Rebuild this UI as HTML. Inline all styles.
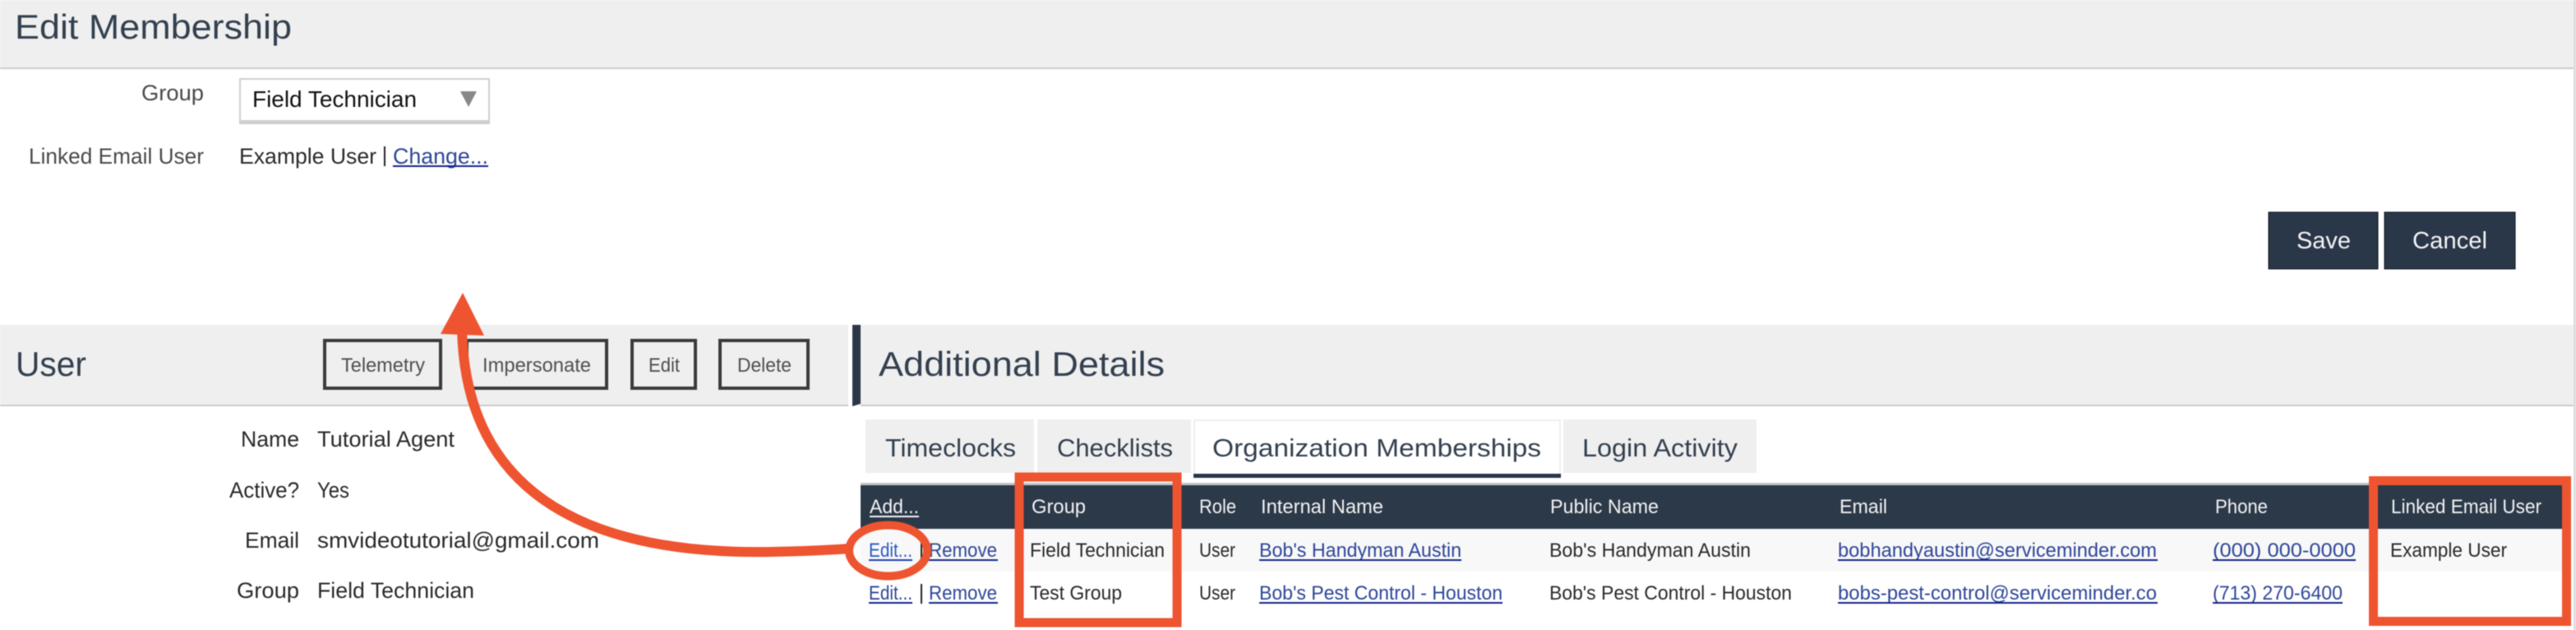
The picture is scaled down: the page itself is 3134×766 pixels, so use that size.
<!DOCTYPE html>
<html><head><meta charset="utf-8"><title>Edit Membership</title>
<style>
html,body{margin:0;padding:0;background:#fff;width:3134px;height:766px;overflow:hidden}
svg{display:block;filter:blur(.5px)}
text{font-family:"Liberation Sans",sans-serif}
.h{font-size:42px;fill:#33404f}
.lbl{font-size:27px;fill:#4a4a4a}
.val{font-size:27px;fill:#2a2a2a}
.btn{font-size:24px;fill:#505050}
.tab{font-size:31px;fill:#33404f}
.th{font-size:24px;fill:#f2f2f2}
.td{font-size:24px;fill:#2a2a2a}
.lnk{font-size:24px;fill:#2d4699}
</style></head><body>
<svg width="3134" height="766" viewBox="0 0 3134 766" xmlns="http://www.w3.org/2000/svg">
<rect width="3134" height="766" fill="#fff"/>

<!-- Edit Membership header -->
<rect x="0" y="0" width="3131" height="82" fill="#efefef"/>
<rect x="0" y="82" width="3131" height="2" fill="#cccccc"/>
<text class="h" x="18" y="47" textLength="337" lengthAdjust="spacingAndGlyphs">Edit Membership</text>

<!-- Form -->
<text class="lbl" x="172" y="122" textLength="76" lengthAdjust="spacingAndGlyphs">Group</text>
<rect x="291" y="95" width="305" height="56" fill="#cfcfcf"/>
<rect x="293" y="97" width="301" height="49" fill="#fff"/>
<text x="307" y="130" font-size="28" fill="#111" textLength="200" lengthAdjust="spacingAndGlyphs">Field Technician</text>
<polygon points="560,111 580,111 570,130" fill="#888"/>
<text class="lbl" x="35" y="199" textLength="213" lengthAdjust="spacingAndGlyphs">Linked Email User</text>
<text class="val" x="291" y="199" textLength="167" lengthAdjust="spacingAndGlyphs">Example User</text>
<rect x="467" y="178" width="2" height="24" fill="#222"/>
<text x="478" y="199" font-size="27" fill="#2d4699" textLength="116" lengthAdjust="spacingAndGlyphs">Change...</text>
<rect x="478" y="201" width="116" height="2" fill="#14238a"/>

<!-- Save / Cancel -->
<rect x="2760" y="258" width="133" height="69" fill="#2a3749" stroke="#10161f" stroke-width="1"/>
<rect x="2901" y="258" width="159" height="69" fill="#2a3749" stroke="#10161f" stroke-width="1"/>
<text x="2794" y="302" font-size="29" fill="#f4f4f4" textLength="66" lengthAdjust="spacingAndGlyphs">Save</text>
<text x="2935" y="302" font-size="29" fill="#f4f4f4" textLength="91" lengthAdjust="spacingAndGlyphs">Cancel</text>

<!-- User header -->
<rect x="0" y="395" width="1032" height="97" fill="#efefef"/>
<rect x="0" y="492" width="1032" height="2" fill="#cccccc"/>
<text class="h" x="19" y="457" textLength="86" lengthAdjust="spacingAndGlyphs">User</text>
<g fill="none" stroke="#3a3a3a" stroke-width="4">
<rect x="395" y="414" width="141" height="58"/>
<rect x="568" y="414" width="170" height="58"/>
<rect x="769" y="414" width="77" height="58"/>
<rect x="876" y="414" width="107" height="58"/>
</g>
<text class="btn" x="415" y="452" textLength="102" lengthAdjust="spacingAndGlyphs">Telemetry</text>
<text class="btn" x="587" y="452" textLength="132" lengthAdjust="spacingAndGlyphs">Impersonate</text>
<text class="btn" x="789" y="452" textLength="38" lengthAdjust="spacingAndGlyphs">Edit</text>
<text class="btn" x="897" y="452" textLength="66" lengthAdjust="spacingAndGlyphs">Delete</text>

<!-- User details -->
<text class="val" x="293" y="543" textLength="71" lengthAdjust="spacingAndGlyphs">Name</text>
<text class="val" x="386" y="543" textLength="167" lengthAdjust="spacingAndGlyphs">Tutorial Agent</text>
<text class="val" x="279" y="605" textLength="85" lengthAdjust="spacingAndGlyphs">Active?</text>
<text class="val" x="386" y="605" textLength="39" lengthAdjust="spacingAndGlyphs">Yes</text>
<text class="val" x="298" y="666" textLength="66" lengthAdjust="spacingAndGlyphs">Email</text>
<text class="val" x="386" y="666" textLength="343" lengthAdjust="spacingAndGlyphs">smvideotutorial@gmail.com</text>
<text class="val" x="288" y="727" textLength="76" lengthAdjust="spacingAndGlyphs">Group</text>
<text class="val" x="386" y="727" textLength="191" lengthAdjust="spacingAndGlyphs">Field Technician</text>

<!-- Additional Details header -->
<polygon points="1037,395 1047,395 1047,491 1037,494" fill="#2a3749"/>
<rect x="1047" y="395" width="2084" height="97" fill="#efefef"/>
<rect x="1047" y="492" width="2084" height="2" fill="#cccccc"/>
<text class="h" x="1069" y="457" textLength="348" lengthAdjust="spacingAndGlyphs">Additional Details</text>

<!-- Tabs -->
<rect x="1053" y="510" width="205" height="65" fill="#efefef"/>
<rect x="1262" y="510" width="187" height="65" fill="#efefef"/>
<rect x="1452" y="510" width="447" height="66" fill="#efefef"/>
<rect x="1454" y="512" width="443" height="64" fill="#fff"/>
<rect x="1452" y="576" width="447" height="5" fill="#2a3749"/>
<rect x="1902" y="510" width="235" height="65" fill="#efefef"/>
<text class="tab" x="1077" y="555" textLength="159" lengthAdjust="spacingAndGlyphs">Timeclocks</text>
<text class="tab" x="1286" y="555" textLength="141" lengthAdjust="spacingAndGlyphs">Checklists</text>
<text class="tab" x="1475" y="555" textLength="400" lengthAdjust="spacingAndGlyphs">Organization Memberships</text>
<text class="tab" x="1925" y="555" textLength="189" lengthAdjust="spacingAndGlyphs">Login Activity</text>

<!-- Table -->
<rect x="1047" y="587" width="2081" height="3" fill="#c4c4c4"/>
<rect x="1047" y="590" width="2081" height="53" fill="#2c3949"/>
<rect x="1047" y="643" width="2081" height="52" fill="#f8f8f8"/>
<text class="th" x="1058" y="624" textLength="60" lengthAdjust="spacingAndGlyphs">Add...</text>
<rect x="1058" y="627" width="60" height="2" fill="#f2f2f2"/>
<text class="th" x="1255" y="624" textLength="66" lengthAdjust="spacingAndGlyphs">Group</text>
<text class="th" x="1459" y="624" textLength="45" lengthAdjust="spacingAndGlyphs">Role</text>
<text class="th" x="1534" y="624" textLength="149" lengthAdjust="spacingAndGlyphs">Internal Name</text>
<text class="th" x="1886" y="624" textLength="132" lengthAdjust="spacingAndGlyphs">Public Name</text>
<text class="th" x="2238" y="624" textLength="58" lengthAdjust="spacingAndGlyphs">Email</text>
<text class="th" x="2695" y="624" textLength="64" lengthAdjust="spacingAndGlyphs">Phone</text>
<text class="th" x="2909" y="624" textLength="183" lengthAdjust="spacingAndGlyphs">Linked Email User</text>

<!-- Row 1 -->
<text x="1057" y="677" font-size="24" fill="#2a5bc4" textLength="53" lengthAdjust="spacingAndGlyphs">Edit...</text>
<rect x="1057" y="680" width="53" height="2" fill="#1f3fae"/>
<rect x="1120" y="658" width="2" height="24" fill="#222"/>
<text class="lnk" x="1130" y="677" textLength="83" lengthAdjust="spacingAndGlyphs">Remove</text>
<rect x="1130" y="680" width="84" height="2" fill="#14238a"/>
<text class="td" x="1253" y="677" textLength="164" lengthAdjust="spacingAndGlyphs">Field Technician</text>
<text class="td" x="1459" y="677" textLength="44" lengthAdjust="spacingAndGlyphs">User</text>
<text class="lnk" x="1532" y="677" textLength="246" lengthAdjust="spacingAndGlyphs">Bob's Handyman Austin</text>
<rect x="1532" y="680" width="246" height="2" fill="#14238a"/>
<text class="td" x="1885" y="677" textLength="245" lengthAdjust="spacingAndGlyphs">Bob's Handyman Austin</text>
<text class="lnk" x="2236" y="677" textLength="388" lengthAdjust="spacingAndGlyphs">bobhandyaustin@serviceminder.com</text>
<rect x="2236" y="680" width="389" height="2" fill="#14238a"/>
<text class="lnk" x="2692" y="677" textLength="174" lengthAdjust="spacingAndGlyphs">(000) 000-0000</text>
<rect x="2692" y="680" width="174" height="2" fill="#14238a"/>
<text class="td" x="2908" y="677" textLength="142" lengthAdjust="spacingAndGlyphs">Example User</text>

<!-- Row 2 -->
<text class="lnk" x="1057" y="729" textLength="53" lengthAdjust="spacingAndGlyphs">Edit...</text>
<rect x="1057" y="732" width="53" height="2" fill="#14238a"/>
<rect x="1120" y="710" width="2" height="24" fill="#222"/>
<text class="lnk" x="1130" y="729" textLength="83" lengthAdjust="spacingAndGlyphs">Remove</text>
<rect x="1130" y="732" width="84" height="2" fill="#14238a"/>
<text class="td" x="1253" y="729" textLength="112" lengthAdjust="spacingAndGlyphs">Test Group</text>
<text class="td" x="1459" y="729" textLength="44" lengthAdjust="spacingAndGlyphs">User</text>
<text class="lnk" x="1532" y="729" textLength="296" lengthAdjust="spacingAndGlyphs">Bob's Pest Control - Houston</text>
<rect x="1532" y="732" width="296" height="2" fill="#14238a"/>
<text class="td" x="1885" y="729" textLength="295" lengthAdjust="spacingAndGlyphs">Bob's Pest Control - Houston</text>
<text class="lnk" x="2236" y="729" textLength="388" lengthAdjust="spacingAndGlyphs">bobs-pest-control@serviceminder.co</text>
<rect x="2236" y="732" width="389" height="2" fill="#14238a"/>
<text class="lnk" x="2692" y="729" textLength="158" lengthAdjust="spacingAndGlyphs">(713) 270-6400</text>
<rect x="2692" y="732" width="158" height="2" fill="#14238a"/>

<!-- Right edge line -->
<rect x="3131" y="0" width="3" height="766" fill="#dcdcdc"/>

<!-- Annotations -->
<g fill="none" stroke="#ee5430">
<rect x="1240" y="580" width="192" height="177" stroke-width="11"/>
<rect x="2887.5" y="584.5" width="235" height="171" stroke-width="11"/>
<ellipse cx="1080.5" cy="669.5" rx="47.5" ry="31" stroke-width="10"/>
<path d="M562 400 C566 590 700 675 938 671 Q990 670 1034 667" stroke-width="12"/>
</g>
<polygon points="563,356 589,408 536,406" fill="#ee5430"/>
</svg>
</body></html>
